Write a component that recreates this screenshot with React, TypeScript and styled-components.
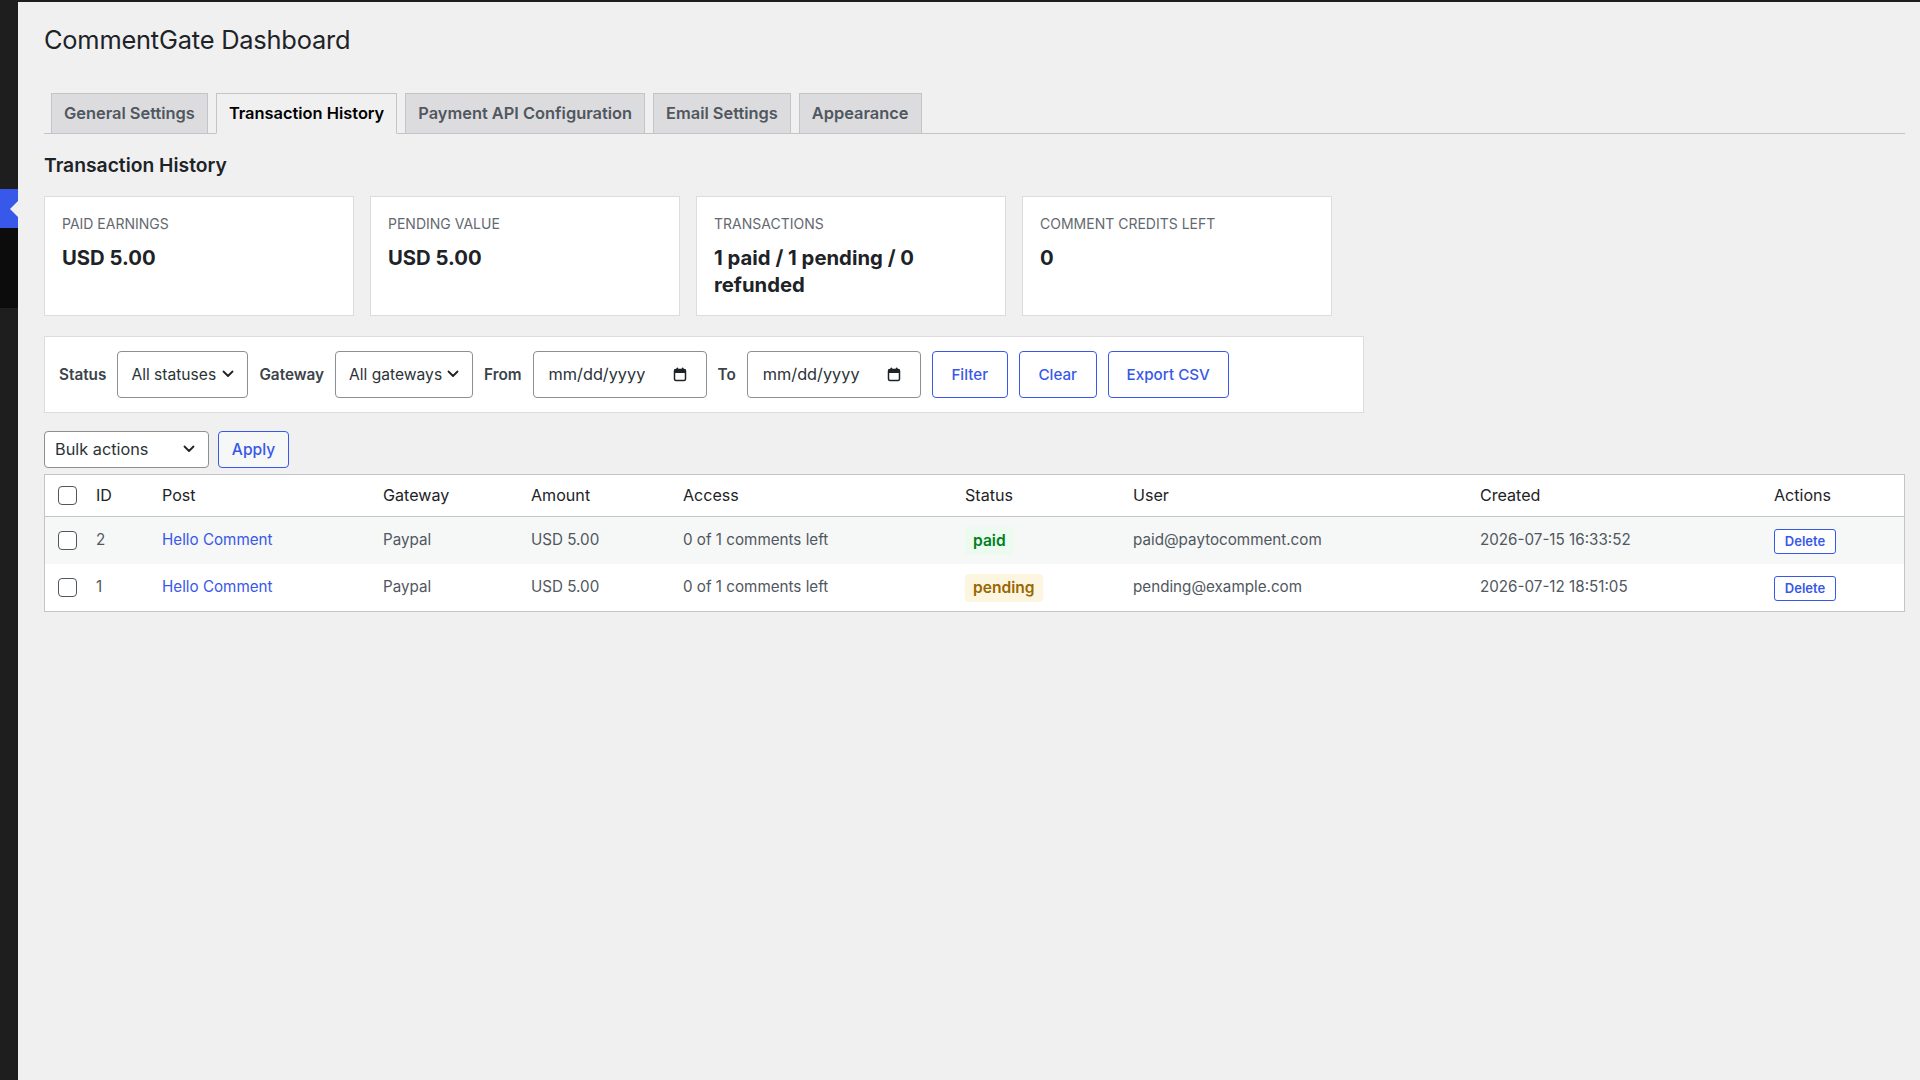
import React from 'react';
import styled, {createGlobalStyle} from 'styled-components';

const GlobalStyle = createGlobalStyle`
    html, body {
        margin: 0;
        padding: 0;
        background: #f0f0f1;
    }
    body {
        font-family: Inter, 'Noto Sans', sans-serif;
        color: #1d2327;
    }
    * {
        box-sizing: border-box;
    }
`;

type Transaction = {
    id: number;
    post: string;
    gateway: string;
    amount: string;
    access: string;
    status: 'paid' | 'pending';
    user: string;
    created: string;
};

const transactions: Transaction[] = [
    {
        id: 2,
        post: 'Hello Comment',
        gateway: 'Paypal',
        amount: 'USD 5.00',
        access: '0 of 1 comments left',
        status: 'paid',
        user: 'paid@paytocomment.com',
        created: '2026-07-15 16:33:52',
    },
    {
        id: 1,
        post: 'Hello Comment',
        gateway: 'Paypal',
        amount: 'USD 5.00',
        access: '0 of 1 comments left',
        status: 'pending',
        user: 'pending@example.com',
        created: '2026-07-12 18:51:05',
    },
];

const tabs = ['General Settings', 'Transaction History', 'Payment API Configuration', 'Email Settings', 'Appearance'];

const stats = [
    {label: 'Paid earnings', value: 'USD 5.00'},
    {label: 'Pending value', value: 'USD 5.00'},
    {label: 'Transactions', value: '1 paid / 1 pending / 0 refunded'},
    {label: 'Comment credits left', value: '0'},
];

const columns = [
    {key: 'check', width: 39},
    {key: 'ID', width: 66},
    {key: 'Post', width: 221},
    {key: 'Gateway', width: 148},
    {key: 'Amount', width: 152},
    {key: 'Access', width: 282},
    {key: 'Status', width: 168},
    {key: 'User', width: 347},
    {key: 'Created', width: 294},
    {key: 'Actions', width: 142},
];

const Chevron = () => (
    <svg width='12' height='8' viewBox='0 0 12 8' fill='none'>
        <path d='M1.5 1.5L6 6L10.5 1.5' stroke='#1d2327' strokeWidth='1.8' strokeLinecap='round' strokeLinejoin='round'/>
    </svg>
);

const CalendarIcon = () => (
    <svg width='14' height='15' viewBox='0 0 14 15' fill='none'>
        <rect x='1.5' y='2.5' width='11' height='11' rx='1.5' stroke='#1d2327' strokeWidth='1.5'/>
        <rect x='1.5' y='2.5' width='11' height='3.5' fill='#1d2327'/>
        <rect x='3.5' y='0.5' width='1.6' height='3' rx='0.8' fill='#1d2327'/>
        <rect x='8.9' y='0.5' width='1.6' height='3' rx='0.8' fill='#1d2327'/>
    </svg>
);

const App = () => {
    return (
        <>
            <GlobalStyle/>
            <Page>
                <Sidebar>
                    <MenuTop/>
                    <MenuCurrent/>
                    <SubMenu/>
                    <MenuRest/>
                </Sidebar>
                <Main>
                    <Title>{'CommentGate Dashboard'}</Title>
                    <TabNav>
                        {tabs.map((tab) => (
                            <Tab
                                key={tab}
                                $active={tab === 'Transaction History'}
                            >
                                {tab}
                            </Tab>
                        ))}
                    </TabNav>

                    <SectionTitle>{'Transaction History'}</SectionTitle>

                    <Cards>
                        {stats.map((stat) => (
                            <Card key={stat.label}>
                                <CardLabel>{stat.label}</CardLabel>
                                <CardValue>{stat.value}</CardValue>
                            </Card>
                        ))}
                    </Cards>

                    <FilterBar>
                        <FilterLabel>{'Status'}</FilterLabel>
                        <Select $width={131}>
                            <span>{'All statuses'}</span>
                            <Chevron/>
                        </Select>
                        <FilterLabel>{'Gateway'}</FilterLabel>
                        <Select $width={138}>
                            <span>{'All gateways'}</span>
                            <Chevron/>
                        </Select>
                        <FilterLabel>{'From'}</FilterLabel>
                        <DateInput>
                            <span>{'mm/dd/yyyy'}</span>
                            <CalendarIcon/>
                        </DateInput>
                        <FilterLabel>{'To'}</FilterLabel>
                        <DateInput>
                            <span>{'mm/dd/yyyy'}</span>
                            <CalendarIcon/>
                        </DateInput>
                        <OutlineButton $width={76}>{'Filter'}</OutlineButton>
                        <OutlineButton $width={78}>{'Clear'}</OutlineButton>
                        <OutlineButton $width={121}>{'Export CSV'}</OutlineButton>
                    </FilterBar>

                    <BulkRow>
                        <BulkSelect>
                            <span>{'Bulk actions'}</span>
                            <Chevron/>
                        </BulkSelect>
                        <ApplyButton>{'Apply'}</ApplyButton>
                    </BulkRow>

                    <Table>
                        <colgroup>
                            {columns.map((col) => (
                                <col
                                    key={col.key}
                                    style={{width: col.width}}
                                />
                            ))}
                        </colgroup>
                        <thead>
                            <tr>
                                {columns.map((col) => (
                                    col.key === 'check' ? (
                                        <HeadCheckCell key={col.key}>
                                            <Checkbox/>
                                        </HeadCheckCell>
                                    ) : (
                                        <HeadCell key={col.key}>{col.key}</HeadCell>
                                    )
                                ))}
                            </tr>
                        </thead>
                        <tbody>
                            {transactions.map((tx, index) => (
                                <Row
                                    key={tx.id}
                                    $striped={index % 2 === 0}
                                >
                                    <CheckCell>
                                        <Checkbox/>
                                    </CheckCell>
                                    <Cell>{tx.id}</Cell>
                                    <Cell>
                                        <PostLink>{tx.post}</PostLink>
                                    </Cell>
                                    <Cell>{tx.gateway}</Cell>
                                    <Cell>{tx.amount}</Cell>
                                    <Cell>{tx.access}</Cell>
                                    <Cell>
                                        <Badge $status={tx.status}>{tx.status}</Badge>
                                    </Cell>
                                    <Cell>{tx.user}</Cell>
                                    <Cell>{tx.created}</Cell>
                                    <Cell>
                                        <DeleteButton>{'Delete'}</DeleteButton>
                                    </Cell>
                                </Row>
                            ))}
                        </tbody>
                    </Table>
                </Main>
            </Page>
        </>
    );
};

const Page = styled.div`
    display: flex;
    min-height: 100vh;
    background: #f0f0f1;
`;

const Sidebar = styled.div`
    width: 18px;
    flex-shrink: 0;
    display: flex;
    flex-direction: column;
    background: #1e1e1e;
`;

const MenuTop = styled.div`
    height: 189px;
    background: #1e1e1e;
`;

const MenuCurrent = styled.div`
    position: relative;
    height: 39px;
    background: #3858e9;

    &::after {
        content: '';
        position: absolute;
        right: 0;
        top: 50%;
        margin-top: -8px;
        border-style: solid;
        border-width: 8px 8px 8px 0;
        border-color: transparent #f0f0f1 transparent transparent;
    }
`;

const SubMenu = styled.div`
    height: 80px;
    background: #0c0c0c;
`;

const MenuRest = styled.div`
    flex: 1;
    background: #1e1e1e;
`;

const Main = styled.div`
    flex: 1;
    min-width: 0;
    border-top: 2px solid #1e1e1e;
    padding: 0 15px 40px 26px;
`;

const Title = styled.h1`
    margin: 0;
    padding-top: 20px;
    font-size: 25.4px;
    font-weight: 400;
    letter-spacing: -0.2px;
    line-height: 36px;
    color: #1d2327;
`;

const TabNav = styled.div`
    display: flex;
    gap: 8px;
    margin-top: 35px;
    padding-left: 7px;
    border-bottom: 1px solid #c3c4c7;
`;

const Tab = styled.div<{$active?: boolean}>`
    margin-bottom: -1px;
    padding: 6px 12px;
    font-size: 16.4px;
    font-weight: 600;
    line-height: 27px;
    white-space: nowrap;
    border: 1px solid #c3c4c7;
    border-bottom-color: ${({$active}) => ($active ? '#f0f0f1' : '#c3c4c7')};
    background: ${({$active}) => ($active ? '#f0f0f1' : '#dcdcde')};
    color: ${({$active}) => ($active ? '#000' : '#50575e')};
`;

const SectionTitle = styled.h2`
    margin: 18px 0 0;
    font-size: 19.3px;
    font-weight: 600;
    line-height: 26px;
    color: #1d2327;
`;

const Cards = styled.div`
    display: grid;
    grid-template-columns: repeat(4, 310px);
    gap: 16px;
    margin-top: 18px;
`;

const Card = styled.div`
    background: #fff;
    border: 1px solid #dcdcde;
    padding: 17px;
`;

const CardLabel = styled.div`
    font-size: 14px;
    line-height: 20px;
    text-transform: uppercase;
    color: #646970;
`;

const CardValue = styled.div`
    margin-top: 9.5px;
    font-size: 20.3px;
    font-weight: 700;
    line-height: 27px;
    color: #1d2327;
`;

const FilterBar = styled.div`
    display: flex;
    align-items: center;
    gap: 11px;
    width: 1320px;
    margin-top: 20px;
    padding: 14px;
    background: #fff;
    border: 1px solid #dcdcde;
`;

const FilterLabel = styled.span`
    font-size: 15.3px;
    font-weight: 600;
    color: #3c434a;
`;

const Select = styled.div<{$width: number}>`
    display: flex;
    align-items: center;
    justify-content: space-between;
    width: ${({$width}) => $width}px;
    height: 47px;
    padding: 0 13px 0 13px;
    font-size: 15.6px;
    white-space: nowrap;
    color: #2c3338;
    background: #fff;
    border: 1px solid #8c8f94;
    border-radius: 4px;
`;

const DateInput = styled(Select).attrs({$width: 174})`
    padding: 0 19px 0 15px;
    font-size: 16.3px;
`;

const OutlineButton = styled.button<{$width: number}>`
    width: ${({$width}) => $width}px;
    height: 47px;
    padding: 0;
    font-family: inherit;
    font-size: 15.2px;
    font-weight: 500;
    color: #3858e9;
    background: #fff;
    border: 1px solid #3858e9;
    border-radius: 4px;
`;

const BulkRow = styled.div`
    display: flex;
    gap: 9px;
    margin-top: 18px;
`;

const BulkSelect = styled.div`
    display: flex;
    align-items: center;
    justify-content: space-between;
    width: 165px;
    height: 37px;
    padding: 0 13px 0 10px;
    font-size: 16.3px;
    white-space: nowrap;
    color: #2c3338;
    background: #fff;
    border: 1px solid #8c8f94;
    border-radius: 4px;
`;

const ApplyButton = styled.button`
    width: 71px;
    height: 37px;
    padding: 0;
    font-family: inherit;
    font-size: 15.6px;
    font-weight: 500;
    color: #3858e9;
    background: #f6f7f7;
    border: 1px solid #3858e9;
    border-radius: 4px;
`;

const Table = styled.table`
    width: 100%;
    margin-top: 6px;
    table-layout: fixed;
    border-collapse: separate;
    border-spacing: 0;
    background: #fff;
    border: 1px solid #c3c4c7;
    font-size: 15.2px;
`;

const HeadCell = styled.th`
    height: 42px;
    padding: 0 12px;
    text-align: left;
    font-size: 16.1px;
    font-weight: 400;
    color: #1d2327;
    border-bottom: 1px solid #c3c4c7;
`;

const HeadCheckCell = styled.th`
    padding: 0 0 0 13px;
    vertical-align: middle;
    border-bottom: 1px solid #c3c4c7;
`;

const Row = styled.tr<{$striped?: boolean}>`
    height: 47px;
    background: ${({$striped}) => ($striped ? '#f6f7f7' : '#fff')};
`;

const Cell = styled.td`
    padding: 0 12px 2px;
    vertical-align: middle;
    color: #50575e;
    white-space: nowrap;
`;

const CheckCell = styled.td`
    padding: 0 0 0 13px;
    vertical-align: middle;
`;

const Checkbox = styled.span`
    display: block;
    width: 19px;
    height: 19px;
    background: #fff;
    border: 1px solid #50575e;
    border-radius: 4px;
`;

const PostLink = styled.a`
    color: #3858e9;
    text-decoration: none;
`;

const Badge = styled.span<{$status: 'paid' | 'pending'}>`
    display: inline-block;
    margin-top: 4px;
    padding: 0 8px;
    line-height: 28px;
    font-size: 15.6px;
    font-weight: 600;
    border-radius: 4px;
    color: ${({$status}) => ($status === 'paid' ? '#00801c' : '#9a6700')};
    background: ${({$status}) => ($status === 'paid' ? '#edfaef' : '#fcf6e1')};
`;

const DeleteButton = styled.button`
    width: 62px;
    height: 25px;
    margin-top: 4px;
    padding: 0;
    font-family: inherit;
    font-size: 13px;
    font-weight: 600;
    color: #3858e9;
    background: #fff;
    border: 1px solid #3858e9;
    border-radius: 3px;
`;

export default App;
